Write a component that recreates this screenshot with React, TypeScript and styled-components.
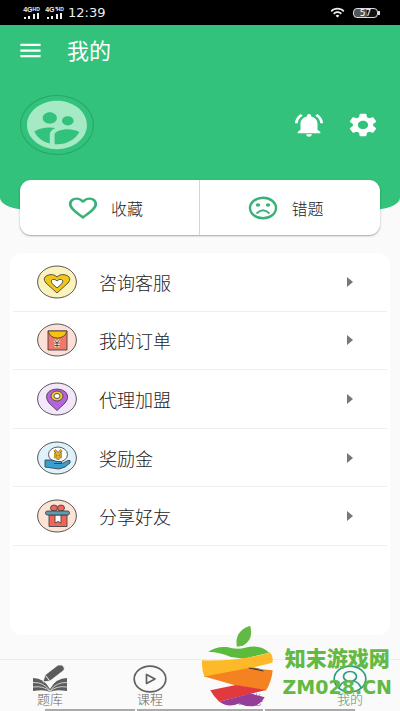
import React from 'react';
import styled, { createGlobalStyle } from 'styled-components';
import {
  MdFavoriteBorder,
  MdMenu,
  MdNotificationsActive,
  MdSettings,
  MdSupervisedUserCircle,
  MdWifi,
} from 'react-icons/md';

const GlobalStyle = createGlobalStyle`
  * { box-sizing: border-box; }
  body { margin: 0; background: #fafafa; font-family: "Noto Sans CJK SC", sans-serif; }
  button { border: 0; padding: 0; background: none; font: inherit; color: inherit; cursor: pointer; }
  svg { display: block; flex: none; }
`;

const Page = styled.div`
  position: relative;
  display: flex;
  flex-direction: column;
  min-height: 100vh;
  overflow: hidden;
  background: #fafafa;
  color: #1c1c1c;
  font-weight: 300;
`;

const StatusBar = styled.div`
  display: flex;
  align-items: center;
  justify-content: space-between;
  height: 25px;
  padding: 0 22px;
  background: #000;
  color: #eee;
`;

const StatusGroup = styled.div<{ $gap: number }>`
  display: flex;
  align-items: center;
  gap: ${(p) => p.$gap}px;
`;

const Signal = styled.div`
  display: flex;
  flex-direction: column;
  align-items: center;
  width: 19px;
  font: bold 7px/6px "Liberation Sans", sans-serif;
  white-space: nowrap;
`;

const SignalLabel = styled.div`
  display: flex;

  small { font-size: 5px; line-height: 4px; }
`;

const Clock = styled.time`
  font: 13px/25px "DejaVu Sans", sans-serif;
`;

const Battery = styled.div`
  position: relative;
  width: 25px;
  height: 10px;
  border: 1px solid #ddd;
  border-radius: 4px;
  background: linear-gradient(90deg, #555 57%, #111 57%);
  color: #fff;
  font: 9px/8px "DejaVu Sans", sans-serif;
  text-align: center;

  &::after {
    content: "";
    position: absolute;
    top: 2px;
    right: -3px;
    width: 2px;
    height: 4px;
    background: #ddd;
  }
`;

const Hero = styled.header`
  height: 185px;
  border-radius: 0 0 30px 30px / 0 0 12px 12px;
  background: #32c27c;
  color: #fff;
`;

const TitleBar = styled.div`
  display: flex;
  align-items: center;
  gap: 23px;
  height: 50px;
  padding: 0 17px;
`;

const Title = styled.h1`
  margin: 0 0 2px;
  font-size: 22px;
  line-height: 30px;
  font-weight: 400;
`;

const Profile = styled.div`
  display: flex;
  align-items: center;
  justify-content: space-between;
  padding: 20px 20px 0;
`;

const StretchIcon = styled.span<{ $width: number; $height: number }>`
  display: block;
  flex: none;

  &, & > svg {
    width: ${(p) => p.$width}px;
    height: ${(p) => p.$height}px;
  }
`;

const Avatar = styled.button`
  border: 1px solid #25a766;
  border-radius: 50%;
  color: #a5e9c5;
`;

const Actions = styled.div`
  display: flex;
  align-items: center;
  gap: 20px;
`;

const Shortcuts = styled.section`
  display: grid;
  grid-template-columns: 1fr 1fr;
  height: 55px;
  margin: -30px 20px 0;
  border-radius: 11px;
  background: #fff;
  box-shadow: 0 1px 2px rgba(0, 0, 0, 0.35);
`;

const Shortcut = styled.button`
  display: flex;
  align-items: center;
  justify-content: center;
  gap: 11px;
  padding-right: 10px;
  font-size: 16px;
  line-height: 22px;
  color: #3cb079;

  &:first-child { border-right: 1px solid #d5d5d5; }
`;

const ShortcutText = styled.span`
  color: #1c1c1c;
`;

const Panel = styled.main`
  flex: 1;
  margin: 18px 10px 24px;
  border-radius: 12px;
  background: #fff;
`;

const Menu = styled.ul`
  display: grid;
  grid-template-rows: repeat(5, 1fr);
  height: 293px;
  margin: 0 3px;
  padding: 0;
  list-style: none;
`;

const MenuItem = styled.li`
  display: flex;
  border-bottom: 1px solid #efefef;
`;

const MenuButton = styled.button`
  display: flex;
  flex: 1;
  align-items: center;
  gap: 22px;
  padding: 0 34px 0 24px;
  font-size: 18px;
  line-height: 26px;
  text-align: left;
`;

const MenuText = styled.span`
  flex: 1;
`;

const TabBar = styled.nav`
  display: grid;
  grid-template-columns: repeat(4, 1fr);
  height: 50px;
  border-top: 1px solid #ececec;
`;

const Tab = styled.button<{ $active?: boolean }>`
  display: flex;
  flex-direction: column;
  align-items: center;
  padding-top: 5px;
  font-size: 13px;
  line-height: 12px;
  color: ${(p) => (p.$active ? '#2a9d83' : '#666')};
`;

const GestureBar = styled.div`
  display: grid;
  grid-template-columns: 90fr 125fr 90fr;
  gap: 2px;
  height: 2px;
  margin: 0 45px;

  span { background: #aaa; }
`;

const Watermark = styled.aside`
  position: absolute;
  right: 8px;
  bottom: 4px;
  display: flex;
  align-items: flex-end;
  gap: 9px;
  color: #62b944;
  pointer-events: none;
`;

const WatermarkText = styled.div`
  display: flex;
  flex-direction: column;
  align-items: center;
  gap: 10px;
  padding-bottom: 13px;
`;

const SiteName = styled.strong`
  font-size: 21px;
  line-height: 26px;
  font-weight: 900;
`;

const SiteAddress = styled.strong`
  font: bold 19px/14px "DejaVu Sans", sans-serif;
`;

const SignalMark = ({ label }: { label: string }) => (
  <Signal>
    <SignalLabel>{label}<small>HD</small></SignalLabel>
    <svg width="16" height="6" viewBox="0 0 16 6" fill="currentColor">
      <path d="M0 4h2v2H0zM4 3h2v3H4zM9 1h2v5H9zM13 0h2v6h-2z" />
    </svg>
  </Signal>
);

const SadFace = () => (
  <svg width="34" height="28" viewBox="0 0 34 28" fill="none" stroke="currentColor" strokeWidth="2.4">
    <ellipse cx="17" cy="14" rx="13" ry="10.3" />
    <path d="M10.5 19.5Q17 13 23.5 19.5" strokeWidth="1.8" />
    <g fill="currentColor" stroke="none">
      <ellipse cx="12" cy="11" rx="2.2" ry="1.8" />
      <ellipse cx="22" cy="11" rx="2.2" ry="1.8" />
    </g>
  </svg>
);

const Badge = ({ tint, children }: { tint: string; children: React.ReactNode }) => (
  <svg width="40" height="34" viewBox="0 0 40 34" stroke="#444" strokeWidth="0.9" strokeLinejoin="round">
    <ellipse cx="20" cy="17" rx="19.4" ry="16" fill={tint} />
    {children}
  </svg>
);

const HeartBadge = () => (
  <Badge tint="#fbf3bb">
    <path d="M20 28L9 18Q5 13 10 10.5Q16 8 20 12Q24 8 30 10.5Q35 13 31 18Z" fill="#f2c617" />
    <path d="M20 23L15 18.5Q13 15.5 15.5 14.5Q18 13.5 20 16Q22 13.5 24.5 14.5Q27 15.5 25 18.5Z" fill="#fff" />
  </Badge>
);

const OrderBadge = () => (
  <Badge tint="#fcdfd6">
    <path d="M11 8H30V27H11Z" fill="#f0776c" />
    <path d="M11 8H30Q28 15 20.5 15Q13 15 11 8Z" fill="#f8c40e" />
    <path d="M17.5 17l2.5 3 2.5-3M17.5 20h5M17.5 22.5h5M20 20v5" fill="none" stroke="#fff1c8" strokeWidth="2.5" />
    <path d="M17.5 17l2.5 3 2.5-3M17.5 20h5M17.5 22.5h5M20 20v5" fill="none" />
  </Badge>
);

const PinBadge = () => (
  <Badge tint="#f4e6fb">
    <path d="M20 28.5L12 21Q7 14 12 9.5Q15 7 20 7Q25 7 28.5 10Q33 15 28 21Z" fill="#b763df" />
    <ellipse cx="20" cy="14" rx="6" ry="5" fill="#f7c834" />
    <ellipse cx="20" cy="14" rx="3" ry="2.5" fill="#fff" />
  </Badge>
);

const RewardBadge = () => (
  <Badge tint="#dff2fb">
    <ellipse cx="21" cy="13.5" rx="9.5" ry="7.5" fill="#fff" />
    <path d="M17.5 9l3.5 4 3.5-4M17 13h8M17 16h8M21 13v6" fill="none" strokeWidth="2.6" />
    <path d="M17.5 9l3.5 4 3.5-4M17 13h8M17 16h8M21 13v6" fill="none" stroke="#f3b91c" strokeWidth="1.5" />
    <path d="M8 19H15L20 20.5H24Q26 22.5 23 22.5H17H25L31 19.5H33V22L28 26L22 28L8 26Z" fill="#399fd1" />
  </Badge>
);

const GiftBadge = () => (
  <Badge tint="#fbe4d5">
    <path d="M12 16H30V27.5H12Z" fill="#ef6658" />
    <ellipse cx="17" cy="9" rx="3.5" ry="3" fill="#ef6658" />
    <ellipse cx="24" cy="9" rx="3.5" ry="3" fill="#ef6658" />
    <path d="M18 16H24V24L21 22.5L18 24Z" fill="#fff" />
    <rect x="8.5" y="12" width="24" height="4" rx="2" fill="#5b9daf" />
  </Badge>
);

const menu = [
  { text: '咨询客服', Icon: HeartBadge },
  { text: '我的订单', Icon: OrderBadge },
  { text: '代理加盟', Icon: PinBadge },
  { text: '奖励金', Icon: RewardBadge },
  { text: '分享好友', Icon: GiftBadge },
];

const BookIcon = () => (
  <svg width="36" height="28" viewBox="0 0 36 28" fill="#5c5c5c">
    <path d="M1 13Q12 13 18 24Q24 13 35 13V26Q23 24 18 27Q13 24 1 26Z" />
    <path d="M1 17.5Q12 17 18 26Q24 17 35 17.5M1 22Q12 20.5 18 26.5Q24 20.5 35 22" fill="none" stroke="#eee" strokeWidth="0.8" />
    <path d="M11 17L13 10L26 0Q30-1 32 2Q33 5 31 6L18 16Z" stroke="#fafafa" strokeWidth="0.8" />
    <path d="M13.5 10.5L17.5 15.500" stroke="#fafafa" />
  </svg>
);

const PlayIcon = () => (
  <svg width="34" height="28" viewBox="0 0 34 28" fill="none" stroke="#606060" strokeWidth="1.7" strokeLinejoin="round">
    <ellipse cx="17" cy="14" rx="15.8" ry="12.8" />
    <path d="M13.5 9.5V18.5L22 14Z" />
  </svg>
);

const PaperIcon = () => (
  <svg width="34" height="28" viewBox="0 0 34 28" fill="none" stroke="#555" strokeWidth="1.5">
    <path d="M15 2L29 5M6 8V25H24V12M10 14H20M10 19H20" />
  </svg>
);

const UserIcon = () => (
  <svg width="34" height="28" viewBox="0 0 34 28" fill="none" stroke="#2a9d83" strokeWidth="1.7">
    <ellipse cx="17" cy="14" rx="15.8" ry="12.8" />
    <ellipse cx="17" cy="11.5" rx="6.5" ry="5" />
    <path d="M6 23Q8 17 13.5 16M28 23Q26 17 20.5 16" />
  </svg>
);

const AppleLogo = () => (
  <svg width="73" height="82" viewBox="30 12 220 246">
    <path d="M138 77Q130 30 178 14Q190 55 156 74Z" fill="#62b944" />
    <path d="M52 92Q76 75 108 78Q140 88 166 79Q210 69 235 95L160 113L120 108Q91 94 52 92Z" fill="#5cba3c" />
    <path d="M33 118Q145 121 239 94Q249 108 245 125L130 153L40 168Q31 143 33 118Z" fill="#fdb927" />
    <path d="M40 167L174 141L246 148Q243 181 226 209L130 192Z" fill="#f58220" />
    <path d="M58 208L135 192L226 207L85 243Q69 228 58 208Z" fill="#e03a3e" />
    <path d="M85 243L180 218L222 229Q208 252 188 256Q164 258 145 248Q111 262 85 243Z" fill="#963d97" />
    <path d="M174 141L218 150" stroke="#333" strokeWidth="3" />
  </svg>
);

export default function App() {
  return (
    <Page>
      <GlobalStyle />
      <StatusBar>
        <StatusGroup $gap={4}>
          <SignalMark label="4G" />
          <SignalMark label="4G⁺" />
          <Clock>12:39</Clock>
        </StatusGroup>
        <StatusGroup $gap={8}>
          <MdWifi size={15} />
          <Battery>57</Battery>
        </StatusGroup>
      </StatusBar>

      <Hero>
        <TitleBar>
          <button aria-label="菜单"><MdMenu size={27} /></button>
          <Title>我的</Title>
        </TitleBar>
        <Profile>
          <Avatar aria-label="头像">
            <StretchIcon $width={72} $height={58}><MdSupervisedUserCircle preserveAspectRatio="none" /></StretchIcon>
          </Avatar>
          <Actions>
            <button aria-label="通知">
              <StretchIcon $width={34} $height={28}><MdNotificationsActive preserveAspectRatio="none" /></StretchIcon>
            </button>
            <button aria-label="设置">
              <StretchIcon $width={34} $height={28}><MdSettings preserveAspectRatio="none" /></StretchIcon>
            </button>
          </Actions>
        </Profile>
      </Hero>

      <Shortcuts>
        <Shortcut>
          <StretchIcon $width={34} $height={28}><MdFavoriteBorder preserveAspectRatio="none" /></StretchIcon>
          <ShortcutText>收藏</ShortcutText>
        </Shortcut>
        <Shortcut>
          <SadFace />
          <ShortcutText>错题</ShortcutText>
        </Shortcut>
      </Shortcuts>

      <Panel>
        <Menu>
          {menu.map(({ text, Icon }) => (
            <MenuItem key={text}>
              <MenuButton>
                <Icon />
                <MenuText>{text}</MenuText>
                <svg width="6" height="10" viewBox="0 0 6 10" fill="#777"><path d="M0 0L6 5L0 10Z" /></svg>
              </MenuButton>
            </MenuItem>
          ))}
        </Menu>
      </Panel>

      <TabBar>
        <Tab><BookIcon />题库</Tab>
        <Tab><PlayIcon />课程</Tab>
        <Tab><PaperIcon />试卷</Tab>
        <Tab $active><UserIcon />我的</Tab>
      </TabBar>
      <GestureBar><span /><span /><span /></GestureBar>

      <Watermark>
        <AppleLogo />
        <WatermarkText>
          <SiteName>知末游戏网</SiteName>
          <SiteAddress>ZM028.CN</SiteAddress>
        </WatermarkText>
      </Watermark>
    </Page>
  );
}
